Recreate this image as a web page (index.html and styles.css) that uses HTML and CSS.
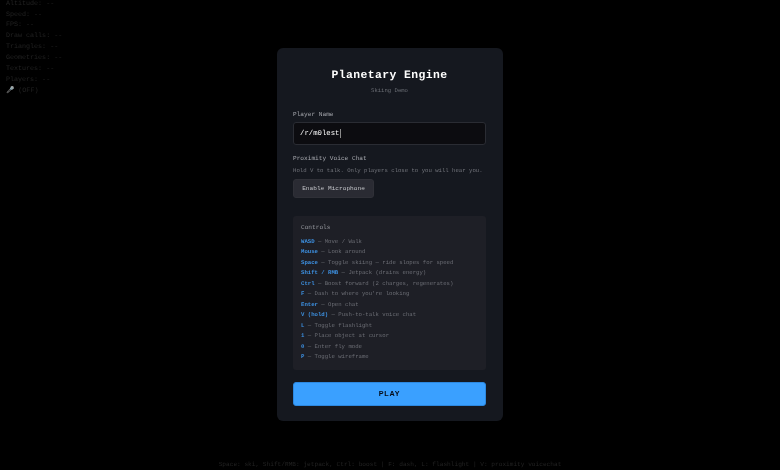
FILE: index.html
```html
<!DOCTYPE html>
<html lang="en">
<head>
<meta charset="utf-8">
<title>Planetary Engine</title>
<link rel="stylesheet" href="styles.css">
</head>
<body>
<div class="hud">
  <div>Altitude: --</div>
  <div>Speed: --</div>
  <div>FPS: --</div>
  <div>Draw calls: --</div>
  <div>Triangles: --</div>
  <div>Geometries: --</div>
  <div>Textures: --</div>
  <div>Players: --</div>
  <div>🎤 (OFF)</div>
</div>
<div class="hint">Space: ski, Shift/RMB: jetpack, Ctrl: boost | F: dash, L: flashlight | V: proximity voicechat</div>
<main class="stage">
  <section class="modal">
    <h1 class="title">Planetary Engine</h1>
    <p class="subtitle">Skiing Demo</p>
    <label class="label">Player Name</label>
    <div class="input"><span>/r/m0lest</span><i class="caret"></i></div>
    <h2 class="label voice-label">Proximity Voice Chat</h2>
    <p class="note">Hold V to talk. Only players close to you will hear you.</p>
    <button class="mic">Enable Microphone</button>
    <div class="controls">
      <h3 class="controls-title">Controls</h3>
      <ul class="list">
        <li><b>WASD</b> — Move / Walk</li>
        <li><b>Mouse</b> — Look around</li>
        <li><b>Space</b> — Toggle skiing — ride slopes for speed</li>
        <li><b>Shift / RMB</b> — Jetpack (drains energy)</li>
        <li><b>Ctrl</b> — Boost forward (2 charges, regenerates)</li>
        <li><b>F</b> — Dash to where you're looking</li>
        <li><b>Enter</b> — Open chat</li>
        <li><b>V (hold)</b> — Push-to-talk voice chat</li>
        <li><b>L</b> — Toggle flashlight</li>
        <li><b>1</b> — Place object at cursor</li>
        <li><b>0</b> — Enter fly mode</li>
        <li><b>P</b> — Toggle wireframe</li>
      </ul>
    </div>
    <button class="play">PLAY</button>
  </section>
</main>
</body>
</html>
```
FILE: styles.css
```css
* { box-sizing: border-box; }
html, body { margin: 0; height: 100%; background: #000; overflow: hidden; }
body { font-family: "Liberation Mono", monospace; position: relative; text-rendering: geometricPrecision; }
.hud { position: absolute; left: 6px; top: -2px; padding-top: 0.6px; font-size: 6.7px; line-height: 10.9px; color: #222; filter: blur(0.45px); }
.hint { position: absolute; left: 0; right: 0; top: 461px; text-align: center; font-size: 6.15px; line-height: 8px; color: #222; filter: blur(0.45px); }
.stage { height: 470px; display: flex; justify-content: center; padding-top: 48px; position: relative; }
.modal { width: 226px; height: 373px; padding: 21px 17px 0 16px; background: #15181f; border-radius: 6px; display: flex; flex-direction: column; filter: blur(0.55px); }
.title { margin: 0; font-size: 11.4px; line-height: 14px; letter-spacing: 0.4px; font-weight: 700; text-align: center; color: #fff; }
.subtitle { margin: 4px 0 0; font-size: 5.6px; line-height: 8px; text-align: center; color: #6a6d74; }
.label { display: block; margin: 16px 0 0; font-size: 6.15px; line-height: 8px; font-weight: 400; color: #a6a8ae; }
.input { margin-top: 3px; height: 23px; padding: 0 6px; display: flex; align-items: center; background: #0c0c10; border: 1px solid #2a2c33; border-radius: 3px; font-size: 7.3px; color: #fff; }
.caret { width: 1px; height: 9px; margin-left: 0.5px; background: #8a8a8a; }
.voice-label { margin-top: 9.5px; }
.note { margin: 4.5px 0 0; font-size: 5.65px; line-height: 8px; color: #72747b; }
.mic { align-self: flex-start; margin-top: 4px; width: 81px; height: 18.5px; padding: 0; background: #2a2b33; border: 1px solid #2f3037; border-radius: 3px; font-family: inherit; font-size: 6.15px; color: #c4c5ca; }
.controls { margin-top: 18px; height: 154px; padding: 8px 8px 0; background: #1e1f26; border-radius: 3px; }
.controls-title { margin: 0 0 5px; font-size: 6.15px; line-height: 8px; font-weight: 400; color: #94969c; }
.list { margin: 0; padding: 0; list-style: none; }
.list li { font-size: 5.65px; line-height: 10.5px; color: #6c6e75; }
.list b { color: #3d90e0; font-weight: 700; }
.play { margin-top: 12px; height: 24px; background: #3aa0ff; border: 1px solid #2c88e0; border-radius: 3px; font-family: "Liberation Sans", sans-serif; font-weight: 700; font-size: 7.2px; letter-spacing: 0.8px; color: #050a14; }
```
